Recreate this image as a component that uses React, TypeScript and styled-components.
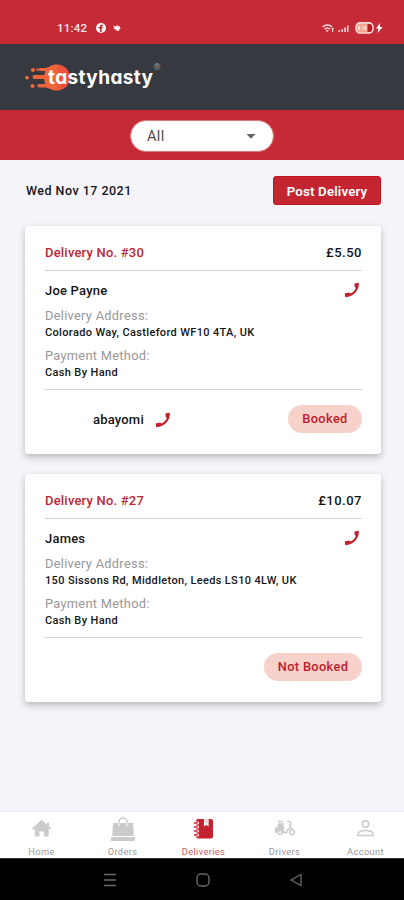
import React from 'react';
import styled, { createGlobalStyle } from 'styled-components';

const Global = createGlobalStyle`
  * { box-sizing: border-box; }
  body { margin: 0; font-family: Roboto, 'Liberation Sans', sans-serif; color: #151517; }
  svg { display: block; flex: none; }
`;

const Screen = styled.div`
  width: 404px;
  height: 900px;
  display: flex;
  flex-direction: column;
  background: #f4f4fa;
  overflow: hidden;
`;

const StatusBar = styled.div`
  height: 44px;
  flex: none;
  background: #c62a36;
  color: #fbe9ea;
  display: flex;
  align-items: center;
  padding: 12px 20px 0 57px;
`;

const Clock = styled.span`
  font-size: 11.5px;
  font-weight: 500;
  letter-spacing: 0.2px;
  width: 38px;
  white-space: nowrap;
`;

const StatusRight = styled.div`
  margin-left: auto;
`;

const Header = styled.header`
  height: 66px;
  flex: none;
  background: #363940;
  padding: 15px 0 0 22px;
`;

const LogoText = styled.text`
  font-family: Inter, sans-serif;
  font-weight: 700;
  font-size: 19px;
  font-feature-settings: 'cv11';
  fill: #fff;
`;

const Registered = styled.text`
  font-size: 9px;
  fill: #96a0ad;
`;

const FilterBar = styled.div`
  height: 50px;
  flex: none;
  background: #c62a36;
  display: flex;
  justify-content: center;
  padding-top: 10px;
`;

const Select = styled.button`
  width: 144px;
  height: 32px;
  border: 1px solid #dc7a7a;
  border-radius: 16px;
  background: #fff;
  display: flex;
  align-items: center;
  justify-content: space-between;
  padding: 0 17px 0 16px;
  font: 400 14.5px Roboto, sans-serif;
  letter-spacing: 0.4px;
  color: #4b4b4d;
`;

const Toolbar = styled.div`
  display: flex;
  align-items: center;
  justify-content: space-between;
  padding: 16px 23px 0 26px;
  height: 45px;
  flex: none;
`;

const DateText = styled.span`
  font-size: 12.5px;
  font-weight: 500;
  letter-spacing: 0.48px;
`;

const PostButton = styled.button`
  width: 108px;
  height: 29px;
  border: 1px solid #bf1420;
  border-radius: 3px;
  background: #c52431;
  color: #fff;
  padding: 1px 0 0;
  font: 600 13.3px Roboto, sans-serif;
  letter-spacing: 0.15px;
`;

const CardList = styled.main`
  flex: 1;
  display: flex;
  flex-direction: column;
  gap: 20px;
  padding: 21px 23px 0 25px;
`;

const Card = styled.article`
  height: 228px;
  flex: none;
  background: #fff;
  border-radius: 3px;
  padding: 0 19px 0 20px;
  box-shadow: 0 3px 7px rgba(0, 0, 0, 0.25);
`;

const CardHead = styled.div`
  height: 45px;
  border-bottom: 1px solid #d2d2d3;
  display: flex;
  align-items: center;
  justify-content: space-between;
  padding-top: 8px;
  font-size: 13px;
  font-weight: 500;
`;

const Title = styled.span`
  color: #bf2630;
  letter-spacing: 0.2px;
`;

const Price = styled.span`
  letter-spacing: 0.5px;
`;

const CustomerRow = styled.div`
  display: flex;
  justify-content: space-between;
  align-items: center;
  height: 36px;
  padding: 2px 2px 0 0;
`;

const Name = styled.span`
  font-size: 13px;
  font-weight: 500;
  letter-spacing: 0.2px;
`;

const Label = styled.div`
  font-size: 12.8px;
  line-height: 18px;
  letter-spacing: 0.3px;
  color: #98989a;
`;

const Value = styled.div`
  font-size: 11px;
  line-height: 16px;
  font-weight: 500;
  height: 22px;
  letter-spacing: 0.35px;
  white-space: nowrap;
`;

const CardFoot = styled.div`
  height: 59px;
  margin-top: 2px;
  border-top: 1px solid #d2d2d3;
  display: flex;
  align-items: center;
  justify-content: space-between;
`;

const Driver = styled.div`
  display: flex;
  align-items: center;
  gap: 11px;
  padding: 1px 0 0 48px;
`;

const Pill = styled.span<{ $wide?: boolean }>`
  width: ${(p) => (p.$wide ? 98 : 74)}px;
  height: 28px;
  border-radius: 14px;
  background: #f6d2ca;
  color: #c01d2b;
  font-size: 12.8px;
  font-weight: 500;
  letter-spacing: 0.35px;
  line-height: 27px;
  text-align: center;
`;

const TabBar = styled.nav`
  height: 47px;
  flex: none;
  background: #fff;
  border-top: 1px solid #ededf1;
  display: grid;
  grid-template-columns: repeat(5, 81px);
  padding-left: 1px;
`;

const Tab = styled.div<{ $active?: boolean }>`
  display: flex;
  flex-direction: column;
  align-items: center;
  padding-top: 5px;
  overflow: hidden;
  color: ${(p) => (p.$active ? '#c5222f' : '#cbcbcb')};
`;

const TabLabel = styled.span<{ $active?: boolean }>`
  font-size: 9.3px;
  line-height: 12px;
  margin-top: 4px;
  letter-spacing: 0.35px;
  color: ${(p) => (p.$active ? '#cb5a67' : '#999')};
`;

const SystemBar = styled.div`
  height: 42px;
  flex: none;
  background: #000;
  border-top: 1px solid #333;
  display: flex;
  align-items: center;
  padding-left: 103px;
  gap: 79px;
`;

const Phone = () => (
  <svg width="16" height="16" viewBox="0 0 16 16" fill="#c1202c">
    <path d="M10.600 1.200 14.800.8c.3 3.200-.6 6.800-3.100 9.500C9 13.200 5.700 14.900 1.300 15.200L.6 11.500 4.900 10.500 6.500 11.600c2.600-1.400 4.300-3.300 5.300-5.700L10.600 4.700z" />
  </svg>
);

const Logo = () => (
  <svg width="145" height="40" viewBox="22 59 145 40">
    <defs>
      <linearGradient id="flame" x1="0" x2="1">
        <stop offset="0" stopColor="#ee6838" />
        <stop offset="1" stopColor="#ef473e" />
      </linearGradient>
    </defs>
    <circle cx="57" cy="77.500" r="13" fill="url(#flame)" />
    <path d="M57 64.500c-6 0-8 3.500-12 3.500h-5a1.500 1.500 0 0 0 0 3h5v4H34.500a1.600 1.600 0 0 0 0 4H45v5h-6a1.700 1.700 0 0 0 0 3.500h6c4 0 6 3 12 3z" fill="#ee6539" />
    <g fill="#ee6838">
      <circle cx="33" cy="70" r="2.100" />
      <circle cx="27" cy="77.700" r="1.900" />
      <circle cx="32.500" cy="86" r="2" />
      <circle cx="37.500" cy="69.700" r="1.200" />
    </g>
    <LogoText x="48" y="83.500" textLength="105" lengthAdjust="spacing">tastyhasty</LogoText>
    <Registered x="153.500" y="69.500">®</Registered>
  </svg>
);

const NotificationIcons = () => (
  <svg width="28" height="12" viewBox="95 22 28 12">
    <circle cx="101" cy="28" r="5" fill="#fff" />
    <path d="M100 32v-3.500h-1.500v-1.500h1.500c-.2-2 .8-2.700 2.800-2.500v1.400c-1.200 0-1.300.2-1.200 1.100h1.200l-.3 1.500h-.9V32z" fill="#bd2630" />
    <path d="M113 25.500l3 1.300 1-1.800 1.300 1.600 1.700-.6-.5 1.700 1.500.8-1.700.7c0 2-1.500 2.500-3.800.2l-2-.6 1-.8z" fill="#fff" />
  </svg>
);

const SignalIcons = () => (
  <svg width="64" height="14" viewBox="320 21 64 14">
    <g fill="none" stroke="#f9d9dc" strokeWidth="1.400">
      <path d="M322.500 27c3-2.600 7-2.600 9.500 0M324.500 29.300c1.600-1.500 4-1.500 5.600 0" />
    </g>
    <path d="M325.500 30.200h3.400l-1.700 2zM331 29l1.600-1.500 1.600 1.500h-1v3h-1.200v-3z" fill="#f9d9dc" />
    <path d="M338.500 30h1.500v2h-1.500zM341.500 29h1.500v3h-1.500zM344.300 27.500h1.600V32h-1.600zM347 25.500h1.500V32H347z" fill="#f9d9dc" />
    <rect x="356" y="22.700" width="17" height="10.400" rx="4" fill="#f1a58f" stroke="#ffe2dc" strokeWidth="1.400" />
    <path d="M367.500 24h2.300c1.500 0 2.500 1.500 2.500 4s-1 4-2.500 4h-2.300z" fill="#b91d27" />
    <path d="M360 26.300h-1.500v3h1.500v-1.500h-1.500M363 26v4M365 26.300h1v3.500h-1z" stroke="#fff3ec" fill="none" strokeWidth=".8" />
    <path d="M380 23l-4 5.500h2.500L377.500 33l5.200-6h-2.800z" fill="#fff" />
  </svg>
);

const HomeIcon = () => (
  <svg width="24" height="25" viewBox="0 0 24 25" fill="currentColor">
    <path d="M11.500 3 17 7.700V5.500h2v4l2.500 2.200-1.200 1.100L18.700 11.700V19.500H14v-5H9.500v5H4.800V11.700l-1.600 1.100L2 11.500z" />
  </svg>
);

const OrdersIcon = () => (
  <svg width="26" height="25" viewBox="0 0 26 25">
    <path d="M9 8V4.500C9 2.500 11 1 13 1s4 1.500 4 3.500V8" fill="none" stroke="currentColor" strokeWidth="1.500" />
    <path d="M3 6h20l.8 13H2.300zM1 20h24v4H1z" fill="currentColor" />
    <path d="M9 6v3M17 6v3" stroke="#fff" strokeWidth="1" />
  </svg>
);

const NotebookIcon = () => (
  <svg width="22" height="25" viewBox="0 0 22 25">
    <path d="M5 2h6v7.500l2.300-1.800 2.300 1.800V2H18q2 0 2 2v15.500q0 2-2 2H5q-2 0-2-2V4q0-2 2-2z" fill="currentColor" />
    <path d="M1.500 6h3M1.500 10h3M1.500 14h3M1.500 18h3" stroke="#fff" strokeWidth="3" strokeLinecap="round" />
    <path d="M1.300 6h3M1.300 10h3M1.300 14h3M1.300 18h3" stroke="currentColor" strokeWidth="1.300" strokeLinecap="round" />
    <path d="M12 2h2.700v5L13.300 6 12 7z" fill="#f7cfd2" />
  </svg>
);

const ScooterIcon = () => (
  <svg width="22" height="25" viewBox="0 0 22 25" fill="none" stroke="currentColor" strokeWidth="1.400">
    <path d="M4 4.500h5M4.500 7h4.500v3.500H4.500zM1.500 14v-1c0-1.500 1.500-2.500 3-2.500h5v4.500h-8z" fill="currentColor" />
    <circle cx="6" cy="15.500" r="2" fill="#fff" />
    <circle cx="18" cy="15.300" r="2.400" />
    <path d="M13.500 4.500h2.500c1.500 1.500.8 2.900-.5 3.700l3 4.600M8.500 15.500h4.300c0-2.500 1.200-4 3.700-4.500" />
  </svg>
);

const AccountIcon = () => (
  <svg width="20" height="25" viewBox="0 0 20 25" fill="none" stroke="currentColor" strokeWidth="1.600">
    <circle cx="9.500" cy="7" r="3.200" />
    <path d="M2 18.500v-1.500c0-2.200 3-3.500 7.500-3.500s7.500 1.300 7.500 3.500v1.500z" />
  </svg>
);

const deliveries = [
  { no: 30, price: '£5.50', name: 'Joe Payne', address: 'Colorado Way, Castleford WF10 4TA, UK', driver: 'abayomi' },
  { no: 27, price: '£10.07', name: 'James', address: '150 Sissons Rd, Middleton, Leeds LS10 4LW, UK', driver: '' },
];

const tabs = [
  { label: 'Home', Icon: HomeIcon },
  { label: 'Orders', Icon: OrdersIcon },
  { label: 'Deliveries', Icon: NotebookIcon, active: true },
  { label: 'Drivers', Icon: ScooterIcon },
  { label: 'Account', Icon: AccountIcon },
];

export default function App() {
  return (
    <Screen>
      <Global />
      <StatusBar>
        <Clock>11:42</Clock>
        <NotificationIcons />
        <StatusRight><SignalIcons /></StatusRight>
      </StatusBar>
      <Header><Logo /></Header>
      <FilterBar>
        <Select>
          All
          <svg width="10" height="5" viewBox="0 0 10 5" fill="#666"><path d="M.5 0h9L5 4.700z" /></svg>
        </Select>
      </FilterBar>
      <Toolbar>
        <DateText>Wed Nov 17 2021</DateText>
        <PostButton>Post Delivery</PostButton>
      </Toolbar>
      <CardList>
        {deliveries.map((d) => (
          <Card key={d.no}>
            <CardHead>
              <Title>Delivery No. #{d.no}</Title>
              <Price>{d.price}</Price>
            </CardHead>
            <CustomerRow>
              <Name>{d.name}</Name>
              <Phone />
            </CustomerRow>
            <Label>Delivery Address:</Label>
            <Value>{d.address}</Value>
            <Label>Payment Method:</Label>
            <Value>Cash By Hand</Value>
            <CardFoot>
              <Driver>
                {d.driver && (
                  <>
                    <Name>{d.driver}</Name>
                    <Phone />
                  </>
                )}
              </Driver>
              <Pill $wide={!d.driver}>{d.driver ? 'Booked' : 'Not Booked'}</Pill>
            </CardFoot>
          </Card>
        ))}
      </CardList>
      <TabBar>
        {tabs.map(({ label, Icon, active }) => (
          <Tab key={label} $active={active}>
            <Icon />
            <TabLabel $active={active}>{label}</TabLabel>
          </Tab>
        ))}
      </TabBar>
      <SystemBar>
        <svg width="14" height="14" viewBox="0 0 14 14" stroke="#686868" strokeWidth="1.500"><path d="M1 1.500h12M1 7h12M1 12.500h12" /></svg>
        <svg width="14" height="14" viewBox="0 0 14 14" fill="none" stroke="#686868" strokeWidth="1.400"><rect x="1" y="1" width="12" height="12" rx="4" /></svg>
        <svg width="14" height="14" viewBox="0 0 14 14" fill="none" stroke="#686868" strokeWidth="1.300"><path d="M12 1.500v11L2 7z" /></svg>
      </SystemBar>
    </Screen>
  );
}
